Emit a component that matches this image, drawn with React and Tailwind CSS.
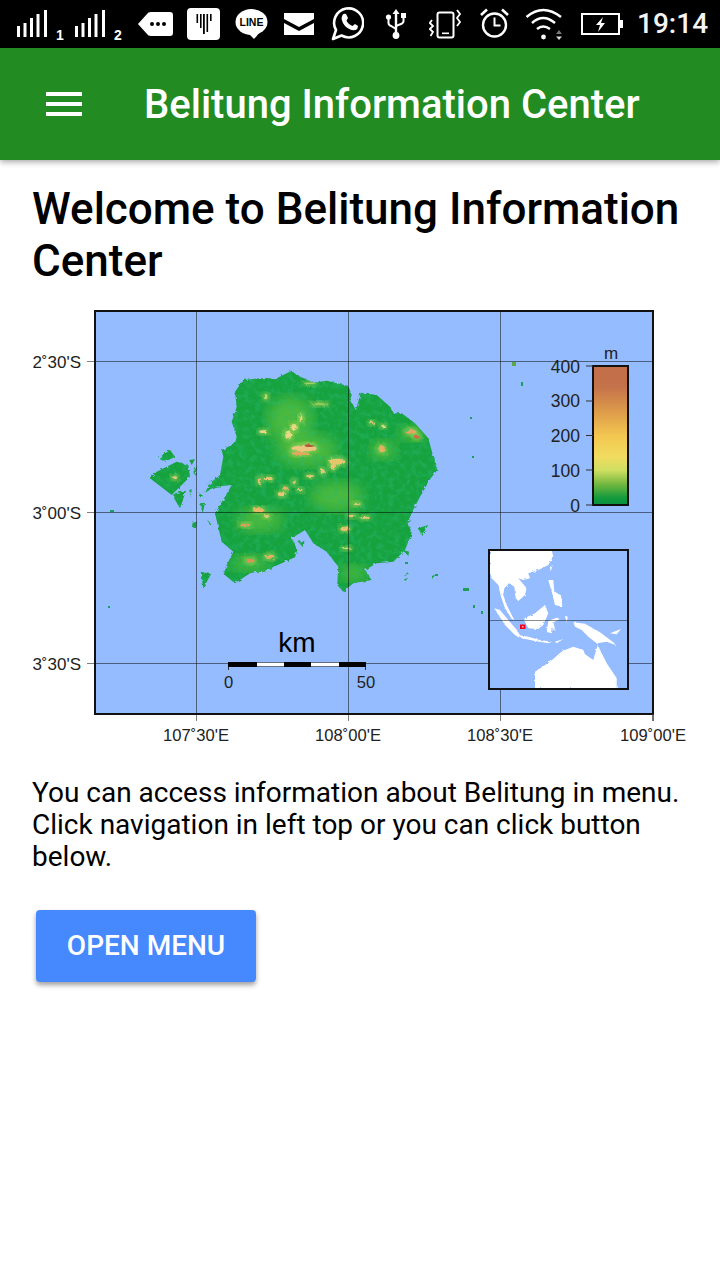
import React from 'react';

// zoomed crop coords -> page coords
const toPath = (pts, ox, oy) =>
  'M' + pts.map(([x, y]) => `${(ox + x / 3).toFixed(1)} ${(oy + y / 3).toFixed(1)}`).join('L') + 'Z';
const isl = (pts) => toPath(pts, 100, 350);
const ins = (pts) => toPath(pts, 485, 545);

const ISLAND = [[430,90],[480,85],[530,85],[575,62],[590,75],[640,98],[680,92],[745,108],[755,135],[750,150],[768,180],[782,128],[830,135],[870,170],[880,190],[905,190],[945,220],[985,265],[1000,320],[1012,360],[992,385],[960,440],[935,488],[925,520],[935,550],[915,600],[880,635],[830,640],[795,660],[815,690],[760,700],[730,725],[712,705],[715,650],[680,605],[640,580],[615,540],[575,565],[592,600],[585,622],[500,660],[450,670],[405,700],[368,670],[400,605],[365,575],[345,490],[375,440],[395,405],[345,410],[315,428],[330,400],[360,375],[370,320],[365,300],[405,280],[410,260],[395,215],[410,170],[405,125]];

const ISLETS = [
  [[175,325],[210,300],[225,320],[195,335]],
  [[170,365],[230,335],[265,345],[270,380],[215,435],[150,385]],
  [[225,430],[258,422],[240,475],[222,445]],
  [[302,665],[333,672],[310,715]],
  [[955,535],[985,525],[965,555]],
  [[278,518],[290,515],[288,535],[276,532]],
  [[300,460],[315,458],[308,490]],
  [[298,430],[310,438],[300,442]],
  [[268,330],[285,328],[275,345]],
  [[280,365],[292,348],[285,375]],
  [[908,600],[928,605],[925,617]],
  [[995,678],[1005,675],[998,688]],
  [[912,672],[928,668],[915,678]],
  [[912,688],[925,684],[915,693]],
  [[595,575],[615,572],[608,592]],
  [[38,480],[50,478],[42,488]],
  [[322,510],[332,520],[328,525]],
  [[268,420],[275,418],[272,438]],
];

const HOT = [
  [612,295,38,9,'#ecc680'],[600,310,26,5,'#e3a860'],[628,287,14,4,'#b9583f'],[712,335,24,9,'#e4c66c'],[700,350,8,9,'#e4c66c'],
  [933,245,16,6,'#dfa860'],[950,260,9,6,'#c9703f'],[565,255,9,13,'#e6d884'],[582,232,8,10,'#e6d884'],[490,245,12,4,'#e6d884'],
  [845,297,9,10,'#e4b060'],[478,392,4,10,'#ecc078'],[505,386,14,4,'#ecc878'],[475,480,16,6,'#e9b765'],[435,525,16,4,'#dd9c5c'],
  [510,620,14,6,'#e4b465'],[450,632,14,5,'#d99258'],[735,537,14,6,'#e4c06c'],[795,503,14,3,'#e4c878'],[755,498,12,3,'#e4c878'],
  [545,432,12,6,'#e4c878'],[556,415,9,4,'#e4b465'],[815,218,8,3,'#e4c878'],[497,140,5,8,'#b9d96a'],
  [668,365,6,8,'#e4c878'],[630,378,12,3,'#dcc878'],[770,462,12,3,'#dcc878'],[660,162,26,2,'#a9d060'],
  [603,205,4,12,'#d0dc78'],[850,228,7,4,'#d0dc78'],[740,595,13,2,'#d0dc78'],[500,498,9,3,'#e4c878'],
  [582,395,5,6,'#e4c878'],[600,420,8,3,'#e4c878'],[225,383,7,4,'#e4c878'],[630,100,18,2,'#a9d060'],
];

const GLOW = [[570,210,70,70],[710,440,80,45],[450,640,60,24],[760,670,44,24],[620,300,90,50],[480,510,70,36],[850,300,40,30],[935,250,40,24]];

function Icon({ w, ml, children }) {
  return (
    <svg width={w} height="48" viewBox={`0 0 ${w} 48`} className="shrink-0" style={{ marginLeft: ml }}>
      {children}
    </svg>
  );
}

function Signal({ n, ml }) {
  return (
    <Icon w={49} ml={ml}>
      <g fill="#fff">
        <rect x="1" y="26" width="3" height="11" />
        <rect x="7.5" y="23" width="3" height="14" />
        <rect x="14" y="18" width="3" height="19" />
        <rect x="20.500" y="14" width="3" height="23" />
        <rect x="28" y="10" width="3" height="27" />
      </g>
      <text x="44" y="40" textAnchor="middle" fill="#fff" fontSize="14" fontWeight="700" className="font-['Liberation_Sans',sans-serif]">{n}</text>
    </Icon>
  );
}

function StatusBar() {
  return (
    <div className="flex h-12 items-center bg-black pl-[16px] text-white">
      <Signal n="1" ml={0} />
      <Signal n="2" ml={9} />
      <Icon w={35} ml={15}>
        <path d="M0 24 L9 14 Q10 12 13 12 H32 Q35 12 35 15 V33 Q35 36 32 36 H13 Q10 36 9 34 Z" fill="#fff" />
        <circle cx="14" cy="24" r="2" fill="#000" /><circle cx="20" cy="24" r="2" fill="#000" /><circle cx="26" cy="24" r="2" fill="#000" />
      </Icon>
      <Icon w={33} ml={14}>
        <rect x="0" y="8" width="33" height="32" rx="4" fill="#fff" />
        <g fill="#000">
          <rect x="9.500" y="14" width="1.6" height="9" /><rect x="13" y="14" width="1.6" height="14" />
          <rect x="16" y="14" width="1.8" height="20" /><rect x="19.500" y="14" width="1.6" height="18" />
          <rect x="23" y="14" width="1.6" height="7" />
        </g>
      </Icon>
      <Icon w={33} ml={15}>
        <ellipse cx="16.500" cy="22" rx="16" ry="13" fill="#fff" />
        <path d="M13 33 L19 39 Q22 36 24 33 Z" fill="#fff" />
        <text x="16.500" y="26" textAnchor="middle" fill="#000" fontSize="10.500" fontWeight="700" className="font-['Liberation_Sans',sans-serif]">LINE</text>
      </Icon>
      <Icon w={30} ml={16}>
        <path d="M0 13 H30 V19 L15 27 L0 19 Z M0 23 L15 31 L30 23 V35 H0 Z" fill="#fff" />
      </Icon>
      <Icon w={33} ml={17}>
        <path d="M2 39 L5 30 A14.500 14.500 0 1 1 10.500 35.500 Z" fill="none" stroke="#fff" strokeWidth="2.6" strokeLinejoin="round" />
        <path d="M11.500 15 Q13 13 15 14 L17 18 L15.500 20.500 Q17 24 21.500 26 L24 24 L27 26 Q27 29 24.500 30 Q19 31 14 26 Q9 20 11.500 15 Z" fill="#fff" />
      </Icon>
      <Icon w={22} ml={21}>
        <g fill="none" stroke="#fff" strokeWidth="2">
          <path d="M11 12 V36" strokeWidth="2.4" />
          <path d="M3.500 19 V23 Q3.500 25 6 26 L11 29" />
          <path d="M18.500 17 V21 Q18.500 23 16 24 L11 26" />
        </g>
        <path d="M11 9 L14.500 14 H7.500 Z" fill="#fff" />
        <circle cx="3.500" cy="17" r="2.6" fill="#fff" />
        <rect x="16" y="13" width="5" height="5" fill="#fff" />
        <circle cx="11" cy="35.500" r="3.400" fill="#fff" />
      </Icon>
      <Icon w={33} ml={22}>
        <rect x="8.500" y="12.500" width="16" height="25" rx="2" fill="none" stroke="#fff" strokeWidth="2" />
        <rect x="13" y="32.500" width="7" height="1.6" fill="#fff" />
        <path d="M3 20 L0.800 23 L4 26 L0.800 29 L4 32 L1.500 36" fill="none" stroke="#fff" strokeWidth="1.8" />
        <path d="M28 10 L31 14 L28 18 L31 22 L28 26" fill="none" stroke="#fff" strokeWidth="1.8" />
      </Icon>
      <Icon w={31} ml={17}>
        <circle cx="15.500" cy="25" r="11.500" fill="none" stroke="#fff" strokeWidth="2.4" />
        <path d="M15.500 17.500 V25.500 H21.500" fill="none" stroke="#fff" strokeWidth="2" />
        <path d="M2 15 L8 9.500 M29 15 L23 9.500" stroke="#fff" strokeWidth="2.6" fill="none" />
      </Icon>
      <Icon w={40} ml={15}>
        <g fill="none" stroke="#fff" strokeWidth="2.4">
          <path d="M1.500 17 Q18 3 36 17" />
          <path d="M7 23 Q18 13 30 23" />
          <path d="M12 29 Q18 24 25 29" />
        </g>
        <circle cx="18.500" cy="37" r="2.400" fill="#fff" />
        <path d="M31 34 L34 30 L37 34 Z" fill="#777" />
        <path d="M31 36.500 H37 L34 40 Z" fill="#ddd" />
      </Icon>
      <Icon w={43} ml={16}>
        <rect x="1" y="14" width="37" height="20" fill="none" stroke="#fff" strokeWidth="2" />
        <rect x="39" y="20" width="3" height="8" fill="#fff" />
        <path d="M22 17 L15 25 H19 L17 32 L24 23 H20 Z" fill="#fff" />
      </Icon>
      <span className="ml-[13px] font-['Roboto',sans-serif] text-[28px] font-medium leading-none text-[#f4f4f4]">19:14</span>
    </div>
  );
}

function BelitungMap() {
  return (
    <svg width="654" height="440" viewBox="33 306 654 440" className="block">
      <defs>
        <clipPath id="land">
          <path d={isl(ISLAND)} />
          {ISLETS.map((pts, i) => <path key={i} d={isl(pts)} />)}
        </clipPath>
        <filter id="rough" x="-5%" y="-5%" width="110%" height="110%">
          <feTurbulence type="fractalNoise" baseFrequency="0.3" numOctaves="2" seed="4" result="n" />
          <feDisplacementMap in="SourceGraphic" in2="n" scale="3.500" />
          <feGaussianBlur stdDeviation="0.4" />
        </filter>
        <filter id="coast" x="-5%" y="-5%" width="110%" height="110%">
          <feTurbulence type="fractalNoise" baseFrequency="0.35" numOctaves="2" seed="7" result="n" />
          <feDisplacementMap in="SourceGraphic" in2="n" scale="2.500" />
          <feGaussianBlur stdDeviation="0.35" />
        </filter>
        <filter id="relief" x="0" y="0" width="100%" height="100%">
          <feTurbulence type="fractalNoise" baseFrequency="0.18" numOctaves="3" seed="9" />
          <feColorMatrix values="0 0 0 0 0.02  0 0 0 0 0.5  0 0 0 0 0.2  2.600 0 0 0 -1.050" />
        </filter>
        <filter id="soft"><feGaussianBlur stdDeviation="0.6" /></filter>
        <filter id="halo"><feGaussianBlur stdDeviation="2.500" /></filter>
        <filter id="softer"><feGaussianBlur stdDeviation="7" /></filter>
        <linearGradient id="scale" x1="0" y1="0" x2="0" y2="1">
          <stop offset="0" stopColor="#c26e4a" />
          <stop offset="0.15" stopColor="#c4724a" />
          <stop offset="0.35" stopColor="#e0a04a" />
          <stop offset="0.5" stopColor="#f2c650" />
          <stop offset="0.65" stopColor="#f2dc5f" />
          <stop offset="0.75" stopColor="#cfdf62" />
          <stop offset="0.85" stopColor="#74b83f" />
          <stop offset="0.95" stopColor="#119a3c" />
          <stop offset="1" stopColor="#0a9040" />
        </linearGradient>
      </defs>

      <rect x="95" y="311" width="558" height="403" fill="#94bcff" />

      <g filter="url(#rough)">
        <g clipPath="url(#land)">
          <rect x="140" y="360" width="310" height="240" fill="#18a23e" />
          {GLOW.map(([x, y, rx, ry], i) => (
            <ellipse key={i} cx={100 + x / 3} cy={350 + y / 3} rx={rx / 3} ry={ry / 3} fill="#5cc03a" opacity="0.8" filter="url(#softer)" />
          ))}
          <rect x="140" y="360" width="310" height="240" filter="url(#relief)" opacity="0.4" />
          {HOT.map(([x, y, rx, ry], i) => (
            <ellipse key={i} cx={100 + x / 3} cy={350 + y / 3} rx={rx / 3 + 2} ry={ry / 3 + 2} fill="#a6d65c" opacity="0.7" filter="url(#halo)" />
          ))}
          {HOT.map(([x, y, rx, ry, c], i) => (
            <ellipse key={i} cx={100 + x / 3} cy={350 + y / 3} rx={rx / 3} ry={ry / 3} fill={c} filter="url(#soft)" />
          ))}
        </g>
      </g>

      {/* far islets */}
      <g fill="#1c9c60">
        <rect x="512" y="362" width="4" height="4" fill="#5aa84a" />
        <rect x="521" y="382" width="2" height="4" />
        <rect x="470" y="417" width="2" height="2" /><rect x="472" y="456" width="2" height="2" />
        <rect x="473" y="605" width="2" height="3" /><rect x="481" y="611" width="2" height="3" />
        <rect x="463" y="588" width="6" height="3" /><rect x="108" y="606" width="2" height="2" />
        <rect x="110" y="510" width="4" height="2" /><rect x="405" y="562" width="3" height="2" />
        <rect x="435" y="574" width="3" height="2" />
      </g>

      {/* graticule */}
      <path d="M196.500 311V721M348.500 311V721M500.500 311V721M87 361.500H653M87 512.500H653M87 663.500H653" fill="none" stroke="#000" strokeOpacity="0.5" strokeWidth="1" />

      {/* inset */}
      <rect x="489" y="550" width="139" height="139" fill="#94bcff" />
      <g fill="#fff" filter="url(#coast)">
        <path d={ins([[15,15],[200,15],[205,35],[190,60],[160,75],[130,85],[135,100],[115,105],[100,100],[125,130],[120,150],[100,168],[92,160],[88,125],[72,115],[58,130],[55,150],[65,180],[88,225],[80,222],[60,190],[48,155],[40,120],[20,100],[15,80]])} />
        <path d={ins([[28,190],[45,195],[70,225],[100,260],[105,280],[90,270],[60,240]])} />
        <path d={ins([[118,220],[150,205],[180,180],[190,205],[175,240],[160,252],[130,250],[122,235]])} />
        <path d={ins([[100,270],[130,275],[165,285],[200,290],[190,295],[150,288],[110,280]])} />
        <path d={ins([[190,228],[215,218],[225,222],[205,232],[212,258],[200,248],[198,265],[185,260]])} />
        <path d={ins([[265,232],[300,236],[345,262],[385,292],[392,300],[365,290],[335,295],[310,275],[290,255],[270,245]])} />
        <path d={ins([[190,105],[205,105],[208,140],[228,150],[232,185],[210,180],[200,140]])} />
        <path d={ins([[150,430],[150,380],[195,350],[232,318],[265,305],[295,315],[300,328],[325,345],[338,300],[350,325],[365,355],[395,400],[395,430]])} />
        <path d={ins([[210,290],[235,282],[215,295]])} />
        <path d={ins([[195,65],[203,60],[197,80]])} />
        <path d={ins([[120,95],[132,92],[128,103]])} />
        <path d={ins([[240,212],[248,215],[245,235]])} />
        <path d={ins([[375,265],[408,252],[395,268]])} />
      </g>
      <path d="M489 620.500H628" stroke="#000" strokeOpacity="0.45" strokeWidth="1" />
      <rect x="520" y="624.500" width="5.500" height="4.500" fill="#f00020" />
      <rect x="522" y="626" width="1.500" height="1.500" fill="#ffb0b8" />
      <rect x="489" y="550" width="139" height="139" fill="none" stroke="#111" strokeWidth="2" />

      {/* scale bar */}
      <rect x="228.500" y="662.500" width="137" height="4" fill="#fff" stroke="#000" strokeWidth="0.500" />
      <g fill="#000">
        <rect x="228" y="662" width="29" height="5" /><rect x="284" y="662" width="27" height="5" />
        <rect x="339" y="662" width="27" height="5" />
      </g>
      <path d="M228.500 667V670M365.500 667V670" stroke="#333" />

      {/* elevation legend */}
      <rect x="593" y="366" width="35" height="139" fill="url(#scale)" stroke="#111" strokeWidth="2" />
      <path d="M586 366H593M586 401H593M586 435.500H593M586 470H593M586 505H593" stroke="#333" strokeWidth="1.200" />

      {/* frame */}
      <rect x="95" y="311" width="558" height="403" fill="none" stroke="#111" strokeWidth="2" />
      <path d="M653 714V721" stroke="#333" strokeWidth="1.400" />

      <g className="font-['Liberation_Sans',sans-serif]" fill="#222">
        <g fontSize="17" textAnchor="end">
          <text x="81" y="368">2˚30'S</text>
          <text x="81" y="519">3˚00'S</text>
          <text x="81" y="670">3˚30'S</text>
        </g>
        <g fontSize="16.600" textAnchor="middle">
          <text x="196" y="741">107˚30'E</text>
          <text x="348" y="741">108˚00'E</text>
          <text x="500" y="741">108˚30'E</text>
          <text x="653" y="741">109˚00'E</text>
          <text x="228.500" y="688">0</text>
          <text x="366" y="688">50</text>
          <text x="611" y="359" fontSize="17">m</text>
        </g>
        <text x="297" y="652" fontSize="28" textAnchor="middle" fill="#000">km</text>
        <g fontSize="17.500" textAnchor="end">
          <text x="580" y="373">400</text>
          <text x="580" y="407">300</text>
          <text x="580" y="442">200</text>
          <text x="580" y="477">100</text>
          <text x="580" y="512">0</text>
        </g>
      </g>
    </svg>
  );
}

export default function App() {
  return (
    <div className="min-h-[1280px] bg-white font-['Roboto',sans-serif] text-black">
      <StatusBar />
      <header className="flex h-[112px] items-center bg-[#228b22] pl-[46px] shadow-[0_2px_6px_rgba(0,0,0,0.35)]">
        <div className="flex w-[36px] flex-col gap-[6px]">
          <div className="h-[4px] bg-white" />
          <div className="h-[4px] bg-white" />
          <div className="h-[4px] bg-white" />
        </div>
        <h1 className="ml-[62px] pt-[1px] text-[40px] font-medium text-white">Belitung Information Center</h1>
      </header>
      <main className="px-[32px] pt-[23px]">
        <h2 className="text-[44px] font-medium leading-[52px]">Welcome to Belitung Information Center</h2>
        <div className="ml-[1px] mt-[19px]">
          <BelitungMap />
        </div>
        <p className="mt-[31px] text-[28px] leading-[32px]">
          You can access information about Belitung in menu. Click navigation in left top or you can click button below.
        </p>
        <button className="ml-[4px] mt-[37px] flex h-[72px] w-[220px] items-center justify-center rounded-[4px] bg-[#4689ff] pb-[1px] text-[28px] font-medium text-white shadow-[0_3px_5px_rgba(0,0,0,0.38)]">
          OPEN MENU
        </button>
      </main>
    </div>
  );
}
